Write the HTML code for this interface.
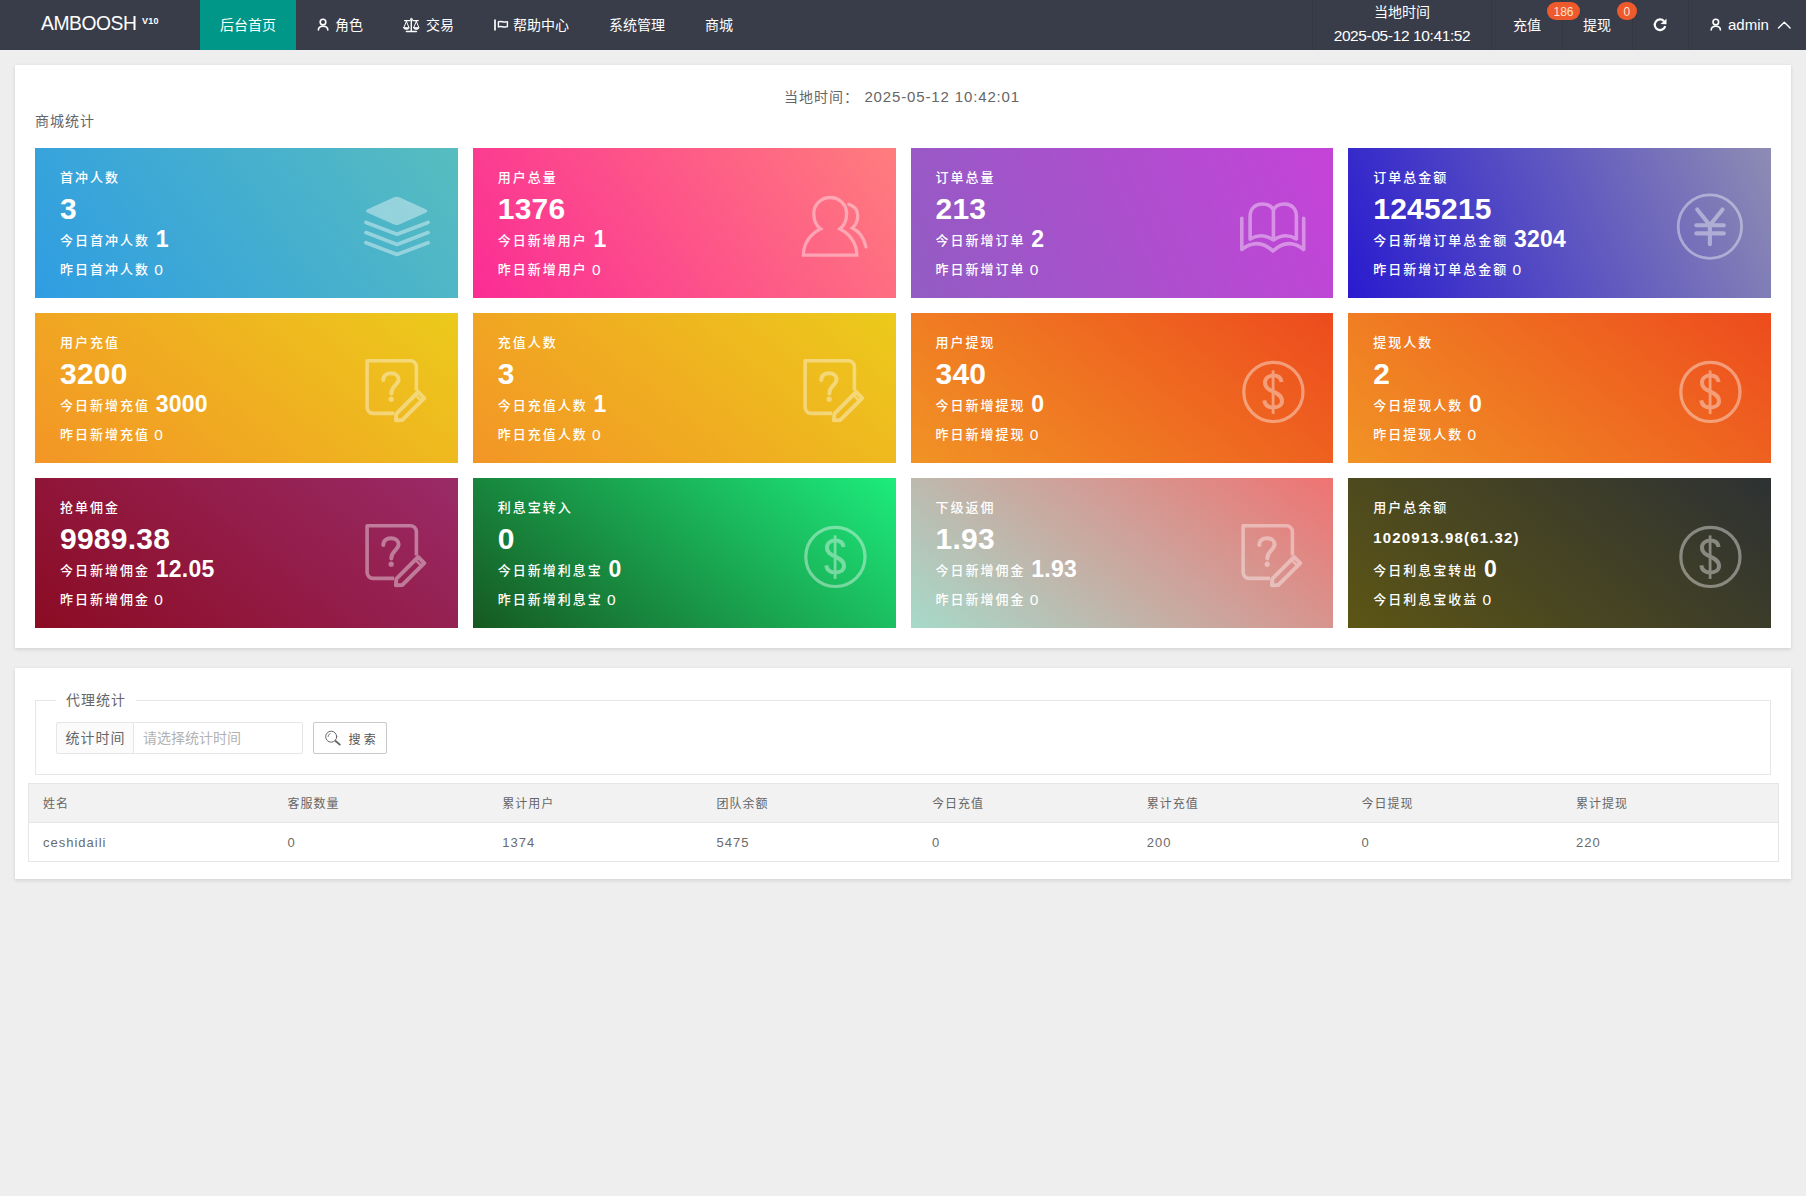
<!DOCTYPE html>
<html lang="zh-CN">
<head>
<meta charset="utf-8">
<title>AMBOOSH</title>
<style>
*{box-sizing:border-box;margin:0;padding:0}
html,body{width:1806px;height:1196px;overflow:hidden}
body{background:#eeeeee;font-family:"Liberation Sans","Noto Sans CJK SC",sans-serif;font-size:14px;color:#333;position:relative}
/* header */
#hd{position:absolute;left:0;top:0;width:1806px;height:50px;background:#393d49}
#hd .it{position:absolute;top:0;height:50px;line-height:50px;color:#fff;font-size:14px;white-space:nowrap}
#hd svg{position:absolute}
#logo{left:41px;font-size:19.3px !important;letter-spacing:-.45px;line-height:48px !important}
#logo sup{position:absolute;left:101px;top:-3.5px;font-size:9px;font-weight:bold;letter-spacing:.3px;line-height:48px}
#act{left:200px;width:96px;background:#009688;text-align:center}
.sep{position:absolute;top:0;width:1px;height:50px;background:#333742}
.sep:after{content:"";position:absolute;left:4px;top:0;width:1px;height:50px;background:#373b46}
.badge{position:absolute;top:2px;height:18px;line-height:20.5px;border-radius:9px;background:#ee5a2c;color:#fde3d0;font-size:12px;text-align:center}
/* panels */
.panel{position:absolute;background:#fff;box-shadow:0 2px 4px rgba(0,0,0,.09),0 0 3px rgba(0,0,0,.05)}
.panel>div,.panel>span{position:absolute;white-space:nowrap}
/* cards */
.card{position:absolute;width:422.75px;height:150px;color:#fff;font-weight:500;overflow:hidden;white-space:nowrap;letter-spacing:1px}
.card div{position:absolute;left:25px;white-space:nowrap}
.card .t{top:19.5px;height:20px;line-height:20px;font-size:13px;letter-spacing:2px}
.card .n{top:45px;height:32px;line-height:32px;font-size:30px;font-weight:bold;letter-spacing:.25px}
.card .n.s{font-size:15px;letter-spacing:1.15px;top:44.4px}
.card .a{top:74.3px;height:30px;line-height:30px;font-size:13px;letter-spacing:2px}
.card .a b{font-size:23px;margin-left:5.8px;letter-spacing:.2px;position:relative;top:1.3px}
.card .y{top:111px;height:20px;line-height:20px;font-size:13px;letter-spacing:2px}
.card .y i{font-style:normal;margin-left:4.3px;font-size:15.5px;position:relative;top:.5px}
.card svg{position:absolute}
/* table */
.th,.td{position:absolute;font-size:12px;letter-spacing:1px;color:#666;white-space:nowrap}
.td{font-size:13px;line-height:20px;margin-top:-.3px;color:#6a6a6a}
</style>
</head>
<body>
<div id="hd">
  <div class="it" id="logo">AMBOOSH<sup>V10</sup></div>
  <div class="it" id="act">后台首页</div>
  <svg style="left:316px;top:17px" width="14" height="16" viewBox="0 0 14 16" fill="none" stroke="#fff" stroke-width="1.6"><circle cx="7" cy="5.1" r="2.8"/><path d="M2.4 13C2.4 10.6 4.6 9.3 7.1 9.3S11.8 10.6 11.8 13" stroke-linecap="round"/></svg>
  <div class="it" style="left:335px">角色</div>
  <svg style="left:402px;top:17px" width="19" height="16" viewBox="0 0 19 16" fill="none" stroke="#fff" stroke-width="1.2" stroke-linecap="round" stroke-linejoin="round"><circle cx="9.3" cy="2.2" r=".9" stroke-width="1"/><path d="M9.3 3.2V14.3M4.4 14.5H14.4M2.6 3.6H7.8M10.8 3.6H16.2" stroke-width="1.4"/><path d="M4.4 4.3L2 10.2M4.4 4.3L6.8 10.2M14.3 4.3L11.9 10.2M14.3 4.3L16.7 10.2" stroke-width="1"/><path d="M1.6 10.6H7.2a2.8 1.9 0 0 1 -5.6 0ZM11.5 10.6H17.1a2.8 1.9 0 0 1 -5.6 0Z" fill="#fff" stroke-width=".7"/></svg>
  <div class="it" style="left:426px">交易</div>
  <svg style="left:493px;top:18px" width="16" height="14" viewBox="0 0 16 14" fill="none" stroke="#fff" stroke-width="1.4" stroke-linejoin="round"><path d="M2 1.6V12.6" stroke-width="1.7"/><path d="M5.4 3.9C8 2.6 11 5 14.4 3.7V8.7C11 10 8 7.6 5.4 8.9Z"/></svg>
  <div class="it" style="left:513px">帮助中心</div>
  <div class="it" style="left:609px">系统管理</div>
  <div class="it" style="left:705px">商城</div>
  <div class="sep" style="left:1312px"></div>
  <div class="sep" style="left:1491px"></div>
  <div class="sep" style="left:1562px"></div>
  <div class="sep" style="left:1632px"></div>
  <div class="sep" style="left:1688px"></div>
  <div class="it" style="left:1312px;width:180px;text-align:center;line-height:24px;top:0">当地时间</div>
  <div class="it" style="left:1312px;width:180px;text-align:center;line-height:24px;top:23.5px;font-size:15.5px;letter-spacing:-.38px;height:24px">2025-05-12 10:41:52</div>
  <div class="it" style="left:1513px">充值</div>
  <div class="badge" style="left:1547px;width:33px">186</div>
  <div class="it" style="left:1583px">提现</div>
  <div class="badge" style="left:1617px;width:19.5px">0</div>
  <svg style="left:1652px;top:17px" width="16" height="16" viewBox="0 0 16 16" fill="none" stroke="#fff" stroke-width="2.2"><path d="M13.2 9.1A5.3 5.3 0 1 1 12 4.2"/><path d="M14.5 1.7V7.2L8.5 7Z" fill="#fff" stroke="none"/></svg>
  <svg style="left:1709px;top:17.2px" width="14" height="16" viewBox="0 0 14 16" fill="none" stroke="#fff" stroke-width="1.6"><circle cx="6.8" cy="5.1" r="2.8"/><path d="M2.2 13C2.2 10.6 4.4 9.3 6.8 9.3S11.4 10.6 11.4 13" stroke-linecap="round"/></svg>
  <div class="it" style="left:1728px;font-size:15px">admin</div>
  <svg style="left:1777px;top:20px" width="15" height="10" viewBox="0 0 15 10" fill="none" stroke="#fff" stroke-width="1.4" stroke-linecap="round" stroke-linejoin="round"><path d="M1.5 8L7.3 2.2L13.1 8"/></svg>
</div>

<div class="panel" id="p1" style="left:15px;top:65px;width:1776px;height:583px">
  <div style="left:769px;top:22px;height:20px;line-height:20px;color:#666;font-size:14px;letter-spacing:1px">当地时间： <span style="font-size:15px;letter-spacing:.86px;margin-left:.5px">2025-05-12 10:42:01</span></div>
  <div style="left:20px;top:46px;height:20px;line-height:20px;color:#666;font-size:14px;letter-spacing:1px">商城统计</div>
<div class="card" style="left:20px;top:83px;background:linear-gradient(-125deg,#57bdbf,#2f9de2)"><div class="t">首冲人数</div><div class="n">3</div><div class="a">今日首冲人数<b>1</b></div><div class="y">昨日首冲人数<i>0</i></div><svg width="423" height="150" viewBox="0 0 423 150" style="left:0;top:0"><g opacity=".4"><path fill="#fff" d="M358.5 49.6 L333.2 60.9 Q328.6 62.9 333.2 64.9 L358.5 76.2 Q361.7 77.7 364.9 76.2 L390.2 64.9 Q394.8 62.9 390.2 60.9 L364.9 49.6 Q361.7 48.1 358.5 49.6Z"/>
<g fill="none" stroke="#fff" stroke-width="3.7" stroke-linecap="round" stroke-linejoin="round">
<path d="M331 74.4 L362 86.2 L393 74.4"/><path d="M331 84.6 L362 96.4 L393 84.6"/><path d="M331 94.7 L362 106.5 L393 94.7"/></g></g></svg></div>
<div class="card" style="left:457.75px;top:83px;background:linear-gradient(-125deg,#ff7d7d,#fb2c95)"><div class="t">用户总量</div><div class="n">1376</div><div class="a">今日新增用户<b>1</b></div><div class="y">昨日新增用户<i>0</i></div><svg width="423" height="150" viewBox="0 0 423 150" style="left:0;top:0"><g opacity=".4" fill="none" stroke="#fff" stroke-width="3.3" stroke-linejoin="miter">
<path d="M347.5 80.9 C343 77.5 340.8 71.5 340.8 65.4 C340.8 56.6 348.2 49.5 357.2 49.5 C366.2 49.5 373.6 56.6 373.6 65.4 C373.6 71.5 371.4 77.5 366.9 80.9 C376 85 383.85 95 383.85 107.05 L330.4 107.05 C330.4 95 338.4 85 347.5 80.9Z"/>
<path stroke-linecap="round" d="M375.8 56.3 C382 58.5 384.8 63 384.75 67.75 C384.7 72.5 382.8 77 379.4 80 C386.5 83.5 391 90 393 99"/>
</g></svg></div>
<div class="card" style="left:895.5px;top:83px;background:linear-gradient(-113deg,#c543d8,#925cc3)"><div class="t">订单总量</div><div class="n">213</div><div class="a">今日新增订单<b>2</b></div><div class="y">昨日新增订单<i>0</i></div><svg width="423" height="150" viewBox="0 0 423 150" style="left:0;top:0"><g opacity=".4"><path fill="none" stroke="#fff" stroke-width="3.6" stroke-linecap="round" stroke-linejoin="round" d="M362.4 62 V92 M339.1 91 V68 C339.1 60.5 344.5 56 351 56 C356.5 56 360.8 58.5 362.4 62 C364 58.5 368.3 56 373.8 56 C380.3 56 385.4 60.5 385.4 68 V91 Q374.5 84 362.4 92 Q350.5 84 339.1 91 M330.8 70.3 V101.5 Q347 89 361.9 103 Q377 89 392.7 101.5 V70.3"/></g></svg></div>
<div class="card" style="left:1333.25px;top:83px;background:linear-gradient(-113deg,#8e8cb3,#291bcf)"><div class="t">订单总金额</div><div class="n">1245215</div><div class="a">今日新增订单总金额<b>3204</b></div><div class="y">昨日新增订单总金额<i>0</i></div><svg width="423" height="150" viewBox="0 0 423 150" style="left:0;top:0"><g opacity=".4" fill="none" stroke="#fff" stroke-linecap="round" stroke-linejoin="round">
<circle cx="361.9" cy="78.6" r="31.7" stroke-width="2.8"/>
<path stroke-width="4.1" d="M349.2 61.5 L361.9 77.2 L374.6 61.5 M348.3 77.2 H375.8 M348.3 85.4 H375.8 M361.9 77.2 V96.3"/>
</g></svg></div>
<div class="card" style="left:20px;top:248px;background:linear-gradient(-141deg,#ecca1b,#f39526)"><div class="t">用户充值</div><div class="n">3200</div><div class="a">今日新增充值<b>3000</b></div><div class="y">昨日新增充值<i>0</i></div><svg width="423" height="150" viewBox="0 0 423 150" style="left:0;top:0"><g opacity=".4"><g fill="none" stroke="#fff" stroke-width="3.6" stroke-linejoin="round">
<path d="M381.4 77.5 V53.7 a6 6 0 0 0 -6 -6 H332.1 V94.4 a6 6 0 0 0 6 6 H359" stroke-linecap="butt"/>
<path stroke-width="3.9" d="M383.1 79 L389.25 85.15 L367.45 106.95 L360.9 107.4 L361.3 100.8Z"/>
<path d="M380.3 81.8 L386.4 87.9" stroke-width="2.4"/>
<path stroke-linecap="round" stroke-width="4" d="M348.3 67 C348.3 62.5 351.5 60.2 356 60.2 C360.5 60.2 363.6 62.8 363.6 66.3 C363.6 72 356.3 72.5 356.3 80.5"/>
</g>
<circle cx="356.2" cy="86.2" r="2.6" fill="#fff"/></g></svg></div>
<div class="card" style="left:457.75px;top:248px;background:linear-gradient(-141deg,#ecca1b,#f39526)"><div class="t">充值人数</div><div class="n">3</div><div class="a">今日充值人数<b>1</b></div><div class="y">昨日充值人数<i>0</i></div><svg width="423" height="150" viewBox="0 0 423 150" style="left:0;top:0"><g opacity=".4"><g fill="none" stroke="#fff" stroke-width="3.6" stroke-linejoin="round">
<path d="M381.4 77.5 V53.7 a6 6 0 0 0 -6 -6 H332.1 V94.4 a6 6 0 0 0 6 6 H359" stroke-linecap="butt"/>
<path stroke-width="3.9" d="M383.1 79 L389.25 85.15 L367.45 106.95 L360.9 107.4 L361.3 100.8Z"/>
<path d="M380.3 81.8 L386.4 87.9" stroke-width="2.4"/>
<path stroke-linecap="round" stroke-width="4" d="M348.3 67 C348.3 62.5 351.5 60.2 356 60.2 C360.5 60.2 363.6 62.8 363.6 66.3 C363.6 72 356.3 72.5 356.3 80.5"/>
</g>
<circle cx="356.2" cy="86.2" r="2.6" fill="#fff"/></g></svg></div>
<div class="card" style="left:895.5px;top:248px;background:linear-gradient(-141deg,#ed4b1d,#f19325)"><div class="t">用户提现</div><div class="n">340</div><div class="a">今日新增提现<b>0</b></div><div class="y">昨日新增提现<i>0</i></div><svg width="423" height="150" viewBox="0 0 423 150" style="left:0;top:0"><g opacity=".4" fill="none" stroke="#fff" stroke-linecap="butt" stroke-linejoin="round">
<circle cx="362.4" cy="78.9" r="29.6" stroke-width="3.2"/>
<path stroke-width="4" d="M370.6 69 C370 65 367 62.6 362.4 62.6 C357.5 62.6 354 65.5 354 69.5 C354 74.5 358 76.5 362.4 78.6 C367 80.8 371 83 371 88 C371 92 367.5 94.5 362.4 94.5 C357.5 94.5 354 92 353.2 87.3"/><path stroke-width="2.8" d="M362.1 57.4 V100.9"/>
</g></svg></div>
<div class="card" style="left:1333.25px;top:248px;background:linear-gradient(-141deg,#ed4b1d,#f19325)"><div class="t">提现人数</div><div class="n">2</div><div class="a">今日提现人数<b>0</b></div><div class="y">昨日提现人数<i>0</i></div><svg width="423" height="150" viewBox="0 0 423 150" style="left:0;top:0"><g opacity=".4" fill="none" stroke="#fff" stroke-linecap="butt" stroke-linejoin="round">
<circle cx="362.4" cy="78.9" r="29.6" stroke-width="3.2"/>
<path stroke-width="4" d="M370.6 69 C370 65 367 62.6 362.4 62.6 C357.5 62.6 354 65.5 354 69.5 C354 74.5 358 76.5 362.4 78.6 C367 80.8 371 83 371 88 C371 92 367.5 94.5 362.4 94.5 C357.5 94.5 354 92 353.2 87.3"/><path stroke-width="2.8" d="M362.1 57.4 V100.9"/>
</g></svg></div>
<div class="card" style="left:20px;top:413px;background:linear-gradient(-141deg,#9a2b68,#8b0b23)"><div class="t">抢单佣金</div><div class="n">9989.38</div><div class="a">今日新增佣金<b>12.05</b></div><div class="y">昨日新增佣金<i>0</i></div><svg width="423" height="150" viewBox="0 0 423 150" style="left:0;top:0"><g opacity=".4"><g fill="none" stroke="#fff" stroke-width="3.6" stroke-linejoin="round">
<path d="M381.4 77.5 V53.7 a6 6 0 0 0 -6 -6 H332.1 V94.4 a6 6 0 0 0 6 6 H359" stroke-linecap="butt"/>
<path stroke-width="3.9" d="M383.1 79 L389.25 85.15 L367.45 106.95 L360.9 107.4 L361.3 100.8Z"/>
<path d="M380.3 81.8 L386.4 87.9" stroke-width="2.4"/>
<path stroke-linecap="round" stroke-width="4" d="M348.3 67 C348.3 62.5 351.5 60.2 356 60.2 C360.5 60.2 363.6 62.8 363.6 66.3 C363.6 72 356.3 72.5 356.3 80.5"/>
</g>
<circle cx="356.2" cy="86.2" r="2.6" fill="#fff"/></g></svg></div>
<div class="card" style="left:457.75px;top:413px;background:linear-gradient(-141deg,#1dec7c,#165821)"><div class="t">利息宝转入</div><div class="n">0</div><div class="a">今日新增利息宝<b>0</b></div><div class="y">昨日新增利息宝<i>0</i></div><svg width="423" height="150" viewBox="0 0 423 150" style="left:0;top:0"><g opacity=".4" fill="none" stroke="#fff" stroke-linecap="butt" stroke-linejoin="round">
<circle cx="362.4" cy="78.9" r="29.6" stroke-width="3.2"/>
<path stroke-width="4" d="M370.6 69 C370 65 367 62.6 362.4 62.6 C357.5 62.6 354 65.5 354 69.5 C354 74.5 358 76.5 362.4 78.6 C367 80.8 371 83 371 88 C371 92 367.5 94.5 362.4 94.5 C357.5 94.5 354 92 353.2 87.3"/><path stroke-width="2.8" d="M362.1 57.4 V100.9"/>
</g></svg></div>
<div class="card" style="left:895.5px;top:413px;background:linear-gradient(-143deg,#ef7372,#a6daca)"><div class="t">下级返佣</div><div class="n">1.93</div><div class="a">今日新增佣金<b>1.93</b></div><div class="y">昨日新增佣金<i>0</i></div><svg width="423" height="150" viewBox="0 0 423 150" style="left:0;top:0"><g opacity=".4"><g fill="none" stroke="#fff" stroke-width="3.6" stroke-linejoin="round">
<path d="M381.4 77.5 V53.7 a6 6 0 0 0 -6 -6 H332.1 V94.4 a6 6 0 0 0 6 6 H359" stroke-linecap="butt"/>
<path stroke-width="3.9" d="M383.1 79 L389.25 85.15 L367.45 106.95 L360.9 107.4 L361.3 100.8Z"/>
<path d="M380.3 81.8 L386.4 87.9" stroke-width="2.4"/>
<path stroke-linecap="round" stroke-width="4" d="M348.3 67 C348.3 62.5 351.5 60.2 356 60.2 C360.5 60.2 363.6 62.8 363.6 66.3 C363.6 72 356.3 72.5 356.3 80.5"/>
</g>
<circle cx="356.2" cy="86.2" r="2.6" fill="#fff"/></g></svg></div>
<div class="card" style="left:1333.25px;top:413px;background:linear-gradient(-141deg,#2d3133,#5c5515)"><div class="t">用户总余额</div><div class="n s">1020913.98(61.32)</div><div class="a">今日利息宝转出<b>0</b></div><div class="y">今日利息宝收益<i>0</i></div><svg width="423" height="150" viewBox="0 0 423 150" style="left:0;top:0"><g opacity=".4" fill="none" stroke="#fff" stroke-linecap="butt" stroke-linejoin="round">
<circle cx="362.4" cy="78.9" r="29.6" stroke-width="3.2"/>
<path stroke-width="4" d="M370.6 69 C370 65 367 62.6 362.4 62.6 C357.5 62.6 354 65.5 354 69.5 C354 74.5 358 76.5 362.4 78.6 C367 80.8 371 83 371 88 C371 92 367.5 94.5 362.4 94.5 C357.5 94.5 354 92 353.2 87.3"/><path stroke-width="2.8" d="M362.1 57.4 V100.9"/>
</g></svg></div>
</div>

<div class="panel" id="p2" style="left:15px;top:668px;width:1776px;height:211px">
  <div style="left:20px;top:32px;width:1736px;height:75px;border:1px solid #e6e6e6"></div>
  <div style="left:41px;top:22px;width:80px;height:20px;line-height:20px;background:#fff;text-align:center;color:#666;font-size:14px;letter-spacing:1px;padding-left:0px">代理统计</div>
  <div style="left:41px;top:54px;width:78px;height:32px;line-height:30px;border:1px solid #e6e6e6;background:#fbfbfb;text-align:center;color:#666;font-size:14px;letter-spacing:1px;border-radius:2px 0 0 2px;padding-left:1px">统计时间</div>
  <div style="left:118px;top:54px;width:170px;height:32px;line-height:30px;border:1px solid #e6e6e6;background:#fff;color:#b2b2b2;font-size:14px;padding-left:9px;border-radius:0 2px 2px 0">请选择统计时间</div>
  <div style="left:298px;top:54px;width:74px;height:32px;line-height:30px;border:1px solid #c9c9c9;background:#fff;color:#555;font-size:12px;border-radius:2px;height:32px">
    <svg style="position:absolute;left:10px;top:6px" width="19" height="19" viewBox="0 0 19 19" fill="none" stroke="#666" stroke-width="1" stroke-linecap="round"><circle cx="7.2" cy="7.7" r="5.5"/><path d="M11.6 12L15.8 15.6" stroke-width="1.9"/><path d="M4 7.6A3.3 3.3 0 0 1 6.2 4.6" stroke-width=".8"/></svg>
    <span style="position:absolute;left:34.5px;top:1.5px;letter-spacing:0">搜 索</span>
  </div>
  <div style="left:13px;top:115px;width:1751px;height:79px;border:1px solid #e6e6e6;background:#fff"></div>
  <div style="left:14px;top:116px;width:1749px;height:39px;background:#f2f2f2;border-bottom:1px solid #e6e6e6"></div>
  <div class="th" style="left:28px;top:126px">姓名</div>
  <div class="th" style="left:272.5px;top:126px">客服数量</div>
  <div class="th" style="left:487.2px;top:126px">累计用户</div>
  <div class="th" style="left:701.6px;top:126px">团队余额</div>
  <div class="th" style="left:917px;top:126px">今日充值</div>
  <div class="th" style="left:1131.7px;top:126px">累计充值</div>
  <div class="th" style="left:1346.4px;top:126px">今日提现</div>
  <div class="th" style="left:1561.1px;top:126px">累计提现</div>
  <div class="td" style="left:28px;top:165px">ceshidaili</div>
  <div class="td" style="left:272.5px;top:165px">0</div>
  <div class="td" style="left:487.2px;top:165px">1374</div>
  <div class="td" style="left:701.6px;top:165px">5475</div>
  <div class="td" style="left:917px;top:165px">0</div>
  <div class="td" style="left:1131.7px;top:165px">200</div>
  <div class="td" style="left:1346.4px;top:165px">0</div>
  <div class="td" style="left:1561.1px;top:165px">220</div>
</div>
</body>
</html>
